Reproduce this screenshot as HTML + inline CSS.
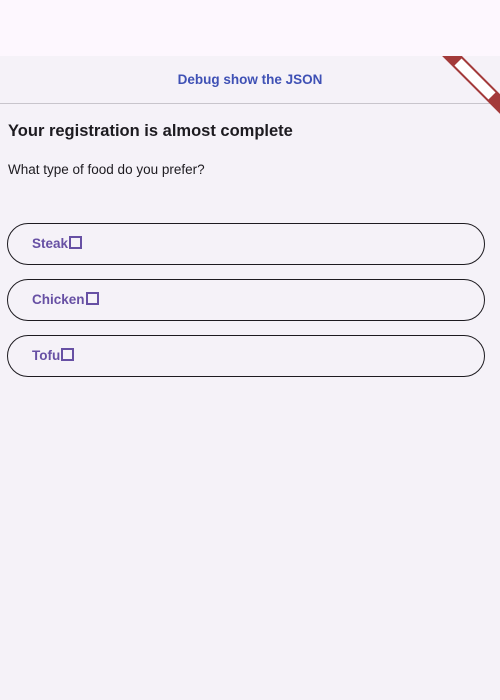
<!DOCTYPE html>
<html><head><style>
body{margin:0;width:500px;height:700px;background:#f5f2f8;font-family:"Liberation Sans",Roboto,sans-serif;position:relative;overflow:hidden}
.top{position:absolute;left:0;top:0;width:500px;height:56px;background:#fdf7fe}
.debug{position:absolute;top:72px;left:0;width:500px;text-align:center;color:#3f51b5;font-size:13.5px;font-weight:bold}
.line{position:absolute;top:103px;left:0;width:500px;height:1px;background:#c8c5cc}
h1{position:absolute;top:122px;left:8px;margin:0;font-size:16.5px;font-weight:bold;color:#1d1b20}
.q{position:absolute;top:162px;left:8px;font-size:13.5px;color:#1d1b20}
.opt{position:absolute;left:7px;width:478px;height:42px;border:1px solid #1d1b20;border-radius:21px;box-sizing:border-box}
.opt span{position:absolute;left:24px;top:12px;font-size:13.5px;font-weight:bold;color:#6750a4}
.cb{display:inline-block;width:9px;height:9px;border:2px solid #6750a4;vertical-align:-1px;margin-left:1px}
</style></head><body>
<div class="top"></div>
<div class="debug">Debug show the JSON</div>
<div class="line"></div>
<svg style="position:absolute;left:0;top:56px" width="500" height="60">
<line x1="446" y1="-6" x2="510" y2="58" stroke="#a33a3a" stroke-width="14"/>
<line x1="458" y1="6" x2="492" y2="40" stroke="#fff" stroke-width="10"/>
</svg>
<h1>Your registration is almost complete</h1>
<div class="q">What type of food do you prefer?</div>
<div class="opt" style="top:223px"><span>Steak<i class="cb"></i></span></div>
<div class="opt" style="top:279px"><span>Chicken<i class="cb"></i></span></div>
<div class="opt" style="top:335px"><span>Tofu<i class="cb"></i></span></div>
</body></html>
